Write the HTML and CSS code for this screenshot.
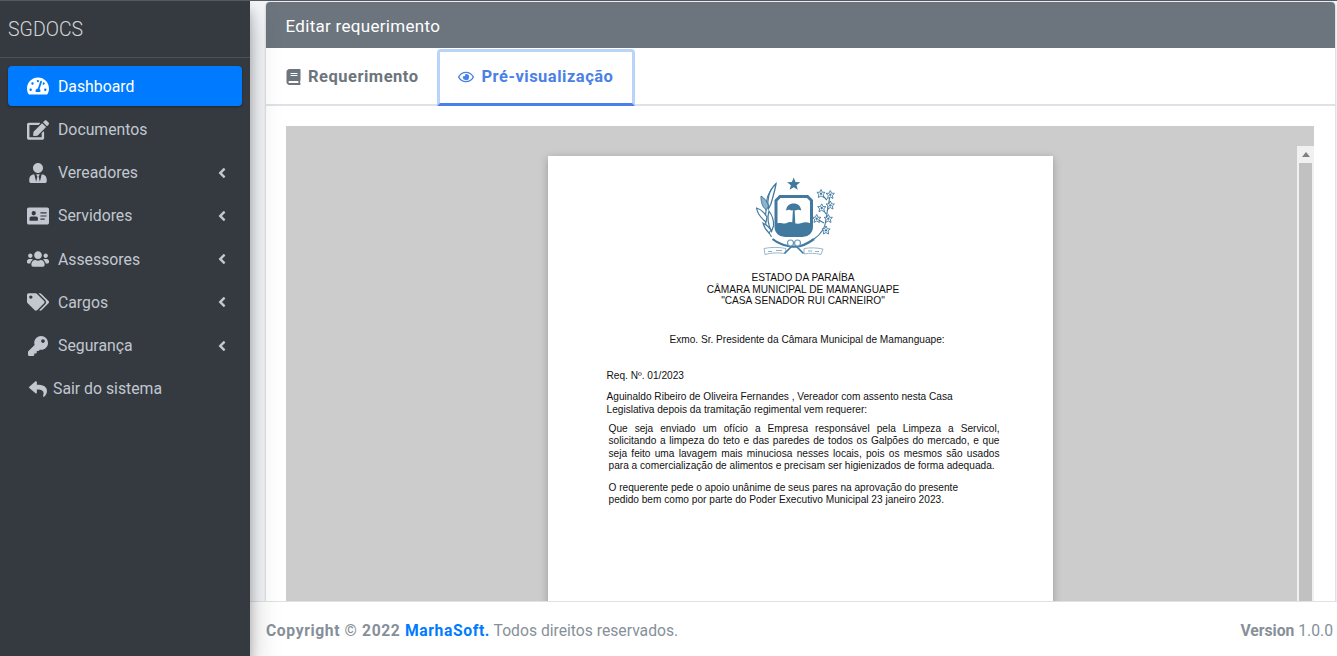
FILE: index.html
```html
<!DOCTYPE html>
<html lang="pt-BR">
<head>
  <meta charset="utf-8">
  <title>SGDOCS</title>
  <link rel="stylesheet" href="styles.css">
</head>
<body>
  <svg class="sprite" xmlns="http://www.w3.org/2000/svg">
    <symbol id="i-gauge" viewBox="0 0 576 512"><path d="M288 32C128.94 32 0 160.94 0 320c0 52.8 14.25 102.26 39.06 144.8 5.61 9.62 16.3 15.2 27.44 15.2h443c11.14 0 21.83-5.58 27.44-15.2C561.75 422.26 576 372.8 576 320c0-159.06-128.94-288-288-288zm0 64c14.71 0 26.58 10.13 30.32 23.65-1.11 2.26-2.64 4.23-3.45 6.67l-9.22 27.67c-5.13 3.49-10.97 6.01-17.64 6.01-17.67 0-32-14.33-32-32S270.33 96 288 96zM96 384c-17.67 0-32-14.33-32-32s14.33-32 32-32 32 14.33 32 32-14.33 32-32 32zm48-160c-17.67 0-32-14.33-32-32s14.33-32 32-32 32 14.33 32 32-14.33 32-32 32zm246.77-72.41l-61.33 184C343.13 347.33 352 364.54 352 384c0 11.72-3.38 22.55-8.88 32H232.88c-5.5-9.45-8.88-20.28-8.88-32 0-33.94 26.5-61.43 59.9-63.59l61.34-184.01c4.17-12.56 17.73-19.45 30.36-15.17 12.57 4.19 19.35 17.79 15.17 30.36zm14.66 57.2l15.52-46.55c3.47-1.29 7.13-2.23 11.05-2.23 17.67 0 32 14.33 32 32s-14.33 32-32 32c-11.38-.01-20.89-6.28-26.57-15.22zM480 384c-17.67 0-32-14.33-32-32s14.33-32 32-32 32 14.33 32 32-14.33 32-32 32z"/></symbol>
    <symbol id="i-edit" viewBox="0 0 576 512"><path d="M402.6 83.2l90.2 90.2c3.8 3.8 3.8 10 0 13.8L274.4 405.6l-92.8 10.3c-12.4 1.4-22.9-9.1-21.5-21.5l10.3-92.8L388.8 83.2c3.8-3.8 10-3.8 13.8 0zm162-22.9l-48.8-48.8c-15.2-15.2-39.9-15.2-55.2 0l-35.4 35.4c-3.8 3.8-3.8 10 0 13.8l90.2 90.2c3.8 3.8 10 3.8 13.8 0l35.4-35.4c15.2-15.3 15.2-40 0-55.2zM384 346.2V448H64V128h229.8c3.2 0 6.2-1.3 8.5-3.5l40-40c7.6-7.6 2.2-20.5-8.5-20.5H48C21.5 64 0 85.5 0 112v352c0 26.5 21.5 48 48 48h352c26.5 0 48-21.5 48-48V306.2c0-10.7-12.9-16-20.5-8.5l-40 40c-2.2 2.3-3.5 5.3-3.5 8.5z"/></symbol>
    <symbol id="i-user-tie" viewBox="0 0 448 512"><path d="M224 256c70.7 0 128-57.3 128-128S294.7 0 224 0 96 57.3 96 128s57.3 128 128 128zm95.8 32.6L272 480l-32-136 32-56h-96l32 56-32 136-47.8-191.4C56.9 292 0 350.3 0 422.4V464c0 26.5 21.5 48 48 48h352c26.5 0 48-21.5 48-48v-41.6c0-72.1-56.9-130.4-128.2-133.8z"/></symbol>
    <symbol id="i-id-card" viewBox="0 0 576 512"><path fill-rule="evenodd" d="M48 32h480c26.500 0 48 21.500 48 48v352c0 26.500-21.500 48-48 48H48c-26.500 0-48-21.500-48-48V80c0-26.500 21.500-48 48-48zM176 128a56 56 0 1 0 0 112 56 56 0 0 0 0-112zM112 272c-26 0-46 20-46 46v50c0 7 5 12 12 12h196c7 0 12-5 12-12v-50c0-26-20-46-46-46zM352 160v32h160v-32zM352 240v32h160v-32zM352 320v32h112v-32z"/></symbol>
    <symbol id="i-users" viewBox="0 0 640 512"><path d="M96 224c35.3 0 64-28.7 64-64s-28.7-64-64-64-64 28.7-64 64 28.7 64 64 64zm448 0c35.3 0 64-28.7 64-64s-28.7-64-64-64-64 28.7-64 64 28.7 64 64 64zm32 32h-64c-17.6 0-33.5 7.1-45.1 18.6 40.3 22.1 68.9 62 75.1 109.4h66c17.7 0 32-14.3 32-32v-32c0-35.3-28.7-64-64-64zm-256 0c61.9 0 112-50.1 112-112S381.9 32 320 32 208 82.1 208 144s50.1 112 112 112zm76.8 32h-8.3c-20.8 10-43.9 16-68.5 16s-47.6-6-68.5-16h-8.3C179.6 288 128 339.6 128 403.2V432c0 26.5 21.5 48 48 48h288c26.5 0 48-21.5 48-48v-28.8c0-63.6-51.6-115.2-115.2-115.2zm-223.7-13.4C161.5 263.1 145.6 256 128 256H64c-35.3 0-64 28.7-64 64v32c0 17.7 14.3 32 32 32h65.9c6.3-47.4 34.9-87.3 75.2-109.4z"/></symbol>
    <symbol id="i-tags" viewBox="0 0 640 512"><path d="M497.941 225.941L286.059 14.059A48 48 0 0 0 252.118 0H48C21.49 0 0 21.49 0 48v204.118a48 48 0 0 0 14.059 33.941l211.882 211.882c18.744 18.745 49.136 18.746 67.882 0l204.118-204.118c18.745-18.745 18.745-49.137 0-67.882zM112 160c-26.51 0-48-21.49-48-48s21.49-48 48-48 48 21.49 48 48-21.49 48-48 48zm513.941 133.823L421.823 497.941c-18.745 18.745-49.137 18.745-67.882 0l-.36-.36L527.64 323.522c16.999-16.999 26.36-39.6 26.36-63.64s-9.362-46.641-26.36-63.64L331.397 0h48.721a48 48 0 0 1 33.941 14.059l211.882 211.882c18.745 18.745 18.745 49.137 0 67.882z"/></symbol>
    <symbol id="i-key" viewBox="0 0 512 512"><path d="M512 176.001C512 273.203 433.202 352 336 352c-11.22 0-22.19-1.062-32.827-3.069l-24.012 27.014A23.999 23.999 0 0 1 261.223 384H224v40c0 13.255-10.745 24-24 24h-40v40c0 13.255-10.745 24-24 24H24c-13.255 0-24-10.745-24-24v-78.059c0-6.365 2.529-12.47 7.029-16.971l161.802-161.802C163.108 213.814 160 195.271 160 176 160 78.798 238.797.001 335.999 0 433.488-.001 512 78.511 512 176.001zM336 128c0 26.51 21.49 48 48 48s48-21.49 48-48-21.49-48-48-48-48 21.49-48 48z"/></symbol>
    <symbol id="i-reply" viewBox="0 0 512 512"><path d="M8.309 189.836L184.313 37.851C199.719 24.546 224 35.347 224 56.015v80.053c160.629 1.839 288 34.032 288 186.258 0 61.441-39.581 122.309-83.333 154.132-13.653 9.931-33.111-2.533-28.077-18.631 45.344-145.012-21.507-183.51-176.59-185.742V360c0 20.7-24.3 31.453-39.687 18.164l-176.004-152c-11.071-9.562-11.086-26.753 0-36.328z"/></symbol>
    <symbol id="i-angle" viewBox="0 0 256 512"><path d="M31.7 239l136-136c9.4-9.4 24.6-9.4 33.9 0l22.6 22.6c9.4 9.4 9.4 24.6 0 33.9L127.9 256l96.4 96.4c9.4 9.4 9.4 24.6 0 33.9L201.7 409c-9.4 9.4-24.6 9.4-33.9 0l-136-136c-9.5-9.4-9.5-24.6-.1-34z"/></symbol>
    <symbol id="i-book" viewBox="0 0 448 512"><path d="M448 360V24c0-13.3-10.7-24-24-24H96C43 0 0 43 0 96v320c0 53 43 96 96 96h328c13.3 0 24-10.7 24-24v-16c0-7.5-3.5-14.3-8.9-18.7-4.2-15.4-4.2-59.3 0-74.7 5.4-4.3 8.9-11.1 8.9-18.6zM128 134c0-3.3 2.7-6 6-6h212c3.3 0 6 2.7 6 6v20c0 3.3-2.7 6-6 6H134c-3.3 0-6-2.7-6-6v-20zm0 64c0-3.3 2.7-6 6-6h212c3.3 0 6 2.7 6 6v20c0 3.3-2.7 6-6 6H134c-3.3 0-6-2.7-6-6v-20zm253.4 250H96c-17.7 0-32-14.3-32-32 0-17.6 14.4-32 32-32h285.4c-1.9 17.1-1.9 46.9 0 64z"/></symbol>
    <symbol id="i-eye" viewBox="0 0 576 512"><path d="M288 144a110.94 110.94 0 0 0-31.24 5 55.4 55.4 0 0 1 7.24 27 56 56 0 0 1-56 56 55.4 55.4 0 0 1-27-7.24A111.71 111.71 0 1 0 288 144zm284.52 97.4C518.29 135.59 410.93 64 288 64S57.68 135.64 3.48 241.41a32.35 32.35 0 0 0 0 29.19C57.71 376.41 165.07 448 288 448s230.32-71.64 284.52-177.41a32.35 32.35 0 0 0 0-29.19zM288 400c-98.65 0-189.09-55-237.93-144C98.91 167 189.34 112 288 112s189.09 55 237.93 144C477.1 345 386.66 400 288 400z"/></symbol>
    <symbol id="flower" viewBox="-5 -5 10 10"><path d="M0-4.800L1.500-1.600 4.700-1.500 2.300.8 3 4.200 0 2.500-3 4.200-2.300.8-4.700-1.500-1.500-1.600z" fill="#fff" stroke="#41799f" stroke-width="1"/><circle r="1.300" fill="#41799f"/></symbol>
  </svg>

  <aside class="sidebar">
    <div class="brand">SGDOCS</div>
    <nav class="menu">
      <a class="menu-link active"><svg class="menu-icon"><use href="#i-gauge"/></svg><span>Dashboard</span></a>
      <a class="menu-link"><svg class="menu-icon"><use href="#i-edit"/></svg><span>Documentos</span></a>
      <a class="menu-link"><svg class="menu-icon"><use href="#i-user-tie"/></svg><span>Vereadores</span><svg class="menu-angle"><use href="#i-angle"/></svg></a>
      <a class="menu-link"><svg class="menu-icon"><use href="#i-id-card"/></svg><span>Servidores</span><svg class="menu-angle"><use href="#i-angle"/></svg></a>
      <a class="menu-link"><svg class="menu-icon"><use href="#i-users"/></svg><span>Assessores</span><svg class="menu-angle"><use href="#i-angle"/></svg></a>
      <a class="menu-link"><svg class="menu-icon"><use href="#i-tags"/></svg><span>Cargos</span><svg class="menu-angle"><use href="#i-angle"/></svg></a>
      <a class="menu-link"><svg class="menu-icon"><use href="#i-key"/></svg><span>Segurança</span><svg class="menu-angle"><use href="#i-angle"/></svg></a>
      <a class="menu-link logout"><svg class="menu-icon"><use href="#i-reply"/></svg><span>Sair do sistema</span></a>
    </nav>
  </aside>

  <div class="wrapper">
    <main class="content">
      <section class="card">
        <header class="card-header">Editar requerimento</header>
        <div class="tabs">
          <a class="tab"><svg class="tab-icon"><use href="#i-book"/></svg>Requerimento</a>
          <a class="tab selected"><svg class="tab-icon"><use href="#i-eye"/></svg>Pré-visualização</a>
        </div>
        <div class="card-body">
          <div class="viewer">
            <div class="viewer-scroll"><span class="scroll-up"></span><span class="scroll-thumb"></span></div>
            <article class="sheet">
              <svg class="emblem" viewBox="0 0 82 88" fill="#41799f">
                <polygon points="37.700,0.500 39.500,5 44.300,5.200 40.500,8.200 41.800,12.800 37.700,10.200 33.600,12.800 34.900,8.200 31.100,5.200 35.900,5"/>
                <path d="M24 19.500h27.500l4 4v26c0 5.500-4 9-9 9H29c-5 0-9-3.500-9-9v-26z" fill="#fff" stroke="#41799f" stroke-width="3"/>
                <path d="M21 46.500c4-1.500 6 .8 9-.3s5-1.700 7.700-.5 5.300 1.300 8 .2 6-1 9 .6v5c0 4-3.500 6-8 6H29c-4.500 0-8-2-8-6z"/>
                <path d="M30 33.500c.5-4.500 3.500-7 7.700-7s7 2.500 7.600 7c-2.300-1-4.300-.8-5.800 0-1.500-.7-2.800-.7-4 0-1.500-.8-3.300-1-5.500 0z"/>
                <path d="M36.900 33h1.700l.7 13.500h-3.100z"/>
                <path d="M15.500 60C10 52 8 43 10 34 9 25 12 15 20 6.700" fill="none" stroke="#41799f" stroke-width="1.200"/>
                <path d="M20 6.700c-1 7-3 13-5 20l-2.500 5c-2-8 0-18 7.500-25z" fill="#fff" stroke="#41799f" stroke-width="1.300"/>
                <path d="M10.500 33C6 30 5 25 5 19c3.500 2 6.500 6 7.500 10z" fill="#8db3cb" stroke="#41799f" stroke-width="1"/>
                <path d="M10 45C5 41 1.500 37 .5 31c4 1 8 5 10.500 9z" fill="#fff" stroke="#41799f" stroke-width="1.200"/>
                <path d="M13 34c3 4 5 9 4.500 15l-2 5.500c-3-6-4.500-14-2.500-20.500z" fill="#fff" stroke="#41799f" stroke-width="1.200"/>
                <path d="M13 56c-3-3-5-6-6-10 3 1.500 6 4 8 7z" fill="#fff" stroke="#41799f" stroke-width="1.100"/>
                <path d="M58 62c6-4 11-10 12-19 1-8 2-14 4-24M66 31l4 6M61 42l7 4M74 28l-3 6M65 17l6 6" fill="none" stroke="#41799f" stroke-width="1.100"/>
                <use href="#flower" x="60.500" y="12.200" width="9" height="9"/>
                <use href="#flower" x="69.800" y="13.200" width="9" height="9"/>
                <use href="#flower" x="61.200" y="26.500" width="9" height="9"/>
                <use href="#flower" x="69.800" y="23.800" width="9" height="9"/>
                <use href="#flower" x="56.200" y="37.200" width="9" height="9"/>
                <use href="#flower" x="67.800" y="37.200" width="9" height="9"/>
                <use href="#flower" x="65.500" y="48.800" width="9" height="9"/>
                <path d="M16.500 62c6 5 15 8 21.500 7.500 6.500.5 14-3 20-7.500" fill="none" stroke="#41799f" stroke-width="2.200"/>
                <path d="M8 71.500c7-1.500 15-1.500 22 0l-1 5c-7-1-13-1-20 1zM48 71.500c6-1 12.500-.8 19 .5l-2 5.500c-6-1.500-11-1.500-17-.5z" fill="#fff" stroke="#8fb0c6" stroke-width=".9"/>
                <path d="M12 74.500h4M20 73.500h6M52 74h4M59 74.500h4" stroke="#8fb0c6" stroke-width="1.200"/>
                <path d="M36 69l-7.500 7.500M40 69l7.500 7.500" fill="none" stroke="#41799f" stroke-width="1.600"/>
                <circle cx="34.500" cy="66" r="3" fill="#fff" stroke="#6a9aba" stroke-width="1.200"/>
                <circle cx="41.500" cy="66" r="3" fill="#fff" stroke="#6a9aba" stroke-width="1.200"/>
              </svg>
              <p class="letterhead">ESTADO DA PARAÍBA<br>CÂMARA MUNICIPAL DE MAMANGUAPE<br>"CASA SENADOR RUI CARNEIRO"</p>
              <p class="salute">Exmo. Sr. Presidente da Câmara Municipal de Mamanguape:</p>
              <p class="req-number">Req. Nº. 01/2023</p>
              <p class="author">Aguinaldo Ribeiro de Oliveira Fernandes , Vereador com assento nesta Casa<br>Legislativa depois da tramitação regimental vem requerer:</p>
              <p class="body-text justified">Que seja enviado um ofício a Empresa responsável pela Limpeza a Servicol, solicitando a limpeza do teto e das paredes de todos os Galpões do mercado, e que seja feito uma lavagem mais minuciosa nesses locais, pois os mesmos são usados para a comercialização de alimentos e precisam ser higienizados de forma adequada.</p>
              <p class="body-text closing">O requerente pede o apoio unânime de seus pares na aprovação do presente<br>pedido bem como por parte do Poder Executivo Municipal 23 janeiro 2023.</p>
            </article>
          </div>
        </div>
      </section>
    </main>
    <footer class="footer">
      <div><b class="copyright">Copyright © 2022 <a class="footer-link">MarhaSoft.</a></b> Todos direitos reservados.</div>
      <div><b>Version</b> 1.0.0</div>
    </footer>
  </div>
</body>
</html>
```
FILE: styles.css
```css
* {
  box-sizing: border-box;
}

html, body {
  height: 100%;
  margin: 0;
}

body {
  display: flex;
  overflow: hidden;
  border-top: 1px solid #555a60;
  font-family: Roboto, "Liberation Sans", sans-serif;
  font-size: 15.800px;
  color: #212529;
  background: #f4f6f9;
}

.sprite {
  display: none;
}

/* sidebar */
.sidebar {
  position: relative;
  z-index: 2;
  flex: 0 0 250px;
  background: #343a40;
  box-shadow: 0 14px 28px rgba(0, 0, 0, .25), 0 10px 10px rgba(0, 0, 0, .22);
}

.brand {
  height: 57px;
  padding: 16px 8px 0;
  border-bottom: 1px solid #4b545c;
  font-size: 19.500px;
  line-height: 26px;
  font-weight: 300;
  color: rgba(255, 255, 255, .8);
}

.menu {
  display: flex;
  flex-direction: column;
  gap: 3.200px;
  padding: 8.400px 8px 0;
}

.menu-link {
  display: flex;
  align-items: center;
  height: 40px;
  padding: 0 16px 0 19px;
  border-radius: 4px;
  color: #c2c7d0;
}

.menu-link.active {
  background: #007bff;
  color: #fff;
  box-shadow: 0 1px 3px rgba(0, 0, 0, .12), 0 1px 2px rgba(0, 0, 0, .24);
}

.menu-icon {
  flex: none;
  width: 22px;
  height: 20px;
  margin-right: 9px;
  fill: currentColor;
}

.logout .menu-icon {
  width: 20px;
  height: 18px;
  margin: 0 5px 0 1px;
}

.menu-angle {
  flex: none;
  width: 10px;
  height: 16px;
  margin-left: auto;
  margin-right: -1px;
  fill: currentColor;
}

/* right column */
.wrapper {
  flex: 1;
  min-width: 0;
  display: flex;
  flex-direction: column;
}

.content {
  flex: 1;
  min-height: 0;
  overflow: hidden;
  padding: 1px 2px 0 16px;
}

.card {
  background: #fff;
  border-radius: 4px 4px 0 0;
  box-shadow: 0 0 1px rgba(0, 0, 0, .125), 0 1px 3px rgba(0, 0, 0, .2);
}

.card-header {
  height: 46px;
  padding: 0 19.500px;
  border-radius: 4px 4px 0 0;
  background: #6c757d;
  color: #fff;
  font-size: 17px;
  letter-spacing: .3px;
  line-height: 49px;
}

.tabs {
  display: flex;
  height: 58px;
  padding-top: 1px;
  border-bottom: 2px solid #dee2e6;
}

.tab {
  display: flex;
  align-items: center;
  height: 57px;
  padding: 0 20px 2px;
  font-size: 16.500px;
  letter-spacing: .5px;
  font-weight: 700;
  color: #6c757d;
}

.tab.selected {
  flex: none;
  width: 198px;
  margin-left: -1px;
  padding: 0 0 2px 18px;
  border: 3px solid #b9d4fb;
  border-bottom: 3px solid #4a80e8;
  border-radius: 4px 4px 0 0;
  color: #4a80e8;
}

.tab-icon {
  flex: none;
  width: 15px;
  height: 16px;
  margin-right: 7px;
  fill: currentColor;
}

.tab.selected .tab-icon {
  width: 16px;
  margin-right: 7px;
}

.card-body {
  padding: 20px 21px 0 20px;
}

.viewer {
  position: relative;
  height: 560px;
  padding-top: 30px;
  background: #ccc;
}

/* browser pdf scrollbar, lies over the grey area */
.viewer-scroll {
  position: absolute;
  top: 20px;
  right: 0;
  bottom: 0;
  width: 17px;
  background: #f1f1f1;
}

.scroll-up {
  display: block;
  width: 0;
  margin: 6px auto 0;
  border: 4px solid transparent;
  border-top: 0;
  border-bottom: 5px solid #808080;
}

.scroll-thumb {
  display: block;
  height: 500px;
  margin: 6px 2px 0;
  background: #c1c1c1;
}

.sheet {
  width: 505px;
  height: 700px;
  margin: 0 auto;
  padding: 21px 53px 0 59px;
  background: #fff;
  box-shadow: 0 2px 8px rgba(0, 0, 0, .25);
  font-family: "Liberation Sans", Arial, sans-serif;
  font-size: 10.150px;
  line-height: 12.500px;
  color: #111;
}

.sheet p {
  margin: 0;
}

.emblem {
  display: block;
  width: 82px;
  height: 88px;
  margin-left: 149px;
}

.letterhead {
  padding-top: 7px;
  text-align: center;
  line-height: 11.500px;
}

.salute {
  padding: 27px 0 0 8px;
  text-align: center;
}

.req-number {
  padding-top: 24px;
}

.author {
  padding-top: 8.500px;
}

.body-text {
  padding-left: 2px;
}

.justified {
  padding-top: 6.500px;
  text-align: justify;
}

.closing {
  padding-top: 9px;
}

/* footer */
.footer {
  flex: none;
  display: flex;
  justify-content: space-between;
  align-items: center;
  height: 55px;
  padding: 3px 4px 0 16px;
  border-top: 1px solid #dee2e6;
  background: #fff;
  color: #869099;
  font-size: 15.700px;
}

.copyright {
  letter-spacing: .6px;
}

.footer-link {
  color: #007bff;
}
```
